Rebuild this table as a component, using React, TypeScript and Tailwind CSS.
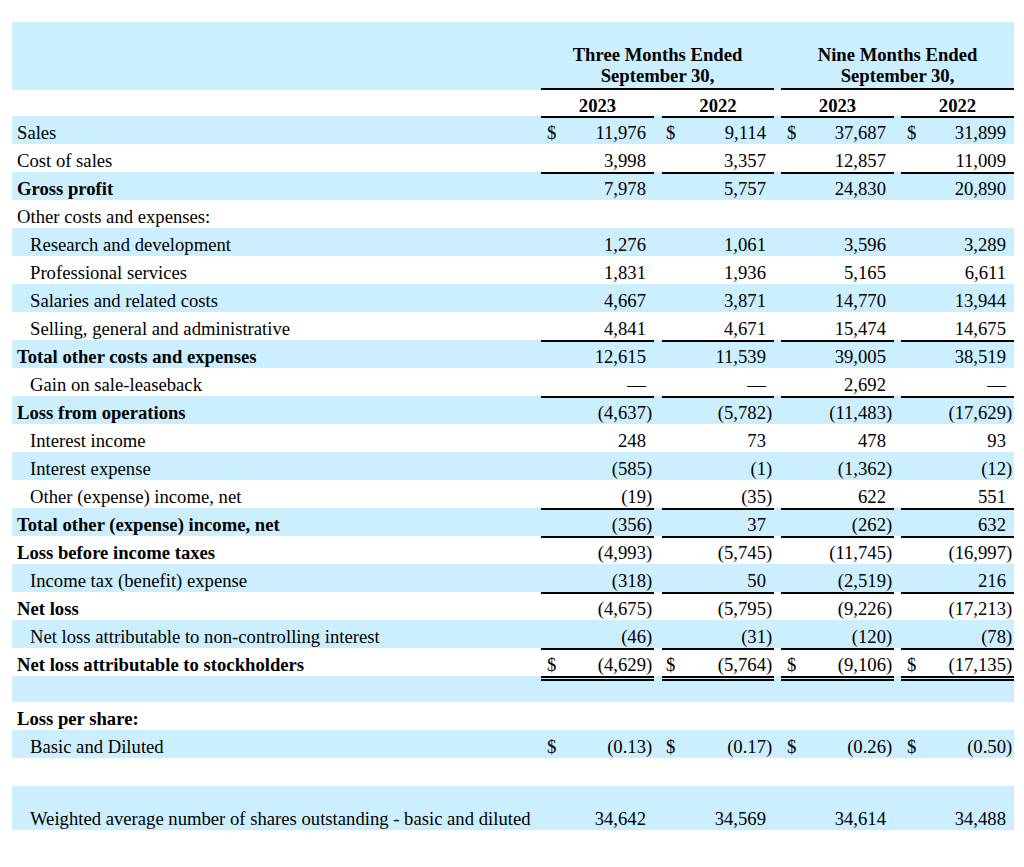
import React from 'react'

type Row = {
  label?: string
  vals?: string[]
  blue?: boolean
  bold?: boolean
  indent?: boolean
  dollar?: boolean
  rule?: 'single' | 'double'
  tall?: boolean
  short?: boolean
}

const rows: Row[] = [
  { label: 'Sales', blue: true, dollar: true, rule: 'single', vals: ['11,976', '9,114', '37,687', '31,899'] },
  { label: 'Cost of sales', vals: ['3,998', '3,357', '12,857', '11,009'] },
  { label: 'Gross profit', blue: true, bold: true, rule: 'single', vals: ['7,978', '5,757', '24,830', '20,890'] },
  { label: 'Other costs and expenses:' },
  { label: 'Research and development', blue: true, indent: true, vals: ['1,276', '1,061', '3,596', '3,289'] },
  { label: 'Professional services', indent: true, vals: ['1,831', '1,936', '5,165', '6,611'] },
  { label: 'Salaries and related costs', blue: true, indent: true, vals: ['4,667', '3,871', '14,770', '13,944'] },
  { label: 'Selling, general and administrative', indent: true, vals: ['4,841', '4,671', '15,474', '14,675'] },
  { label: 'Total other costs and expenses', blue: true, bold: true, rule: 'single', vals: ['12,615', '11,539', '39,005', '38,519'] },
  { label: 'Gain on sale-leaseback', indent: true, vals: ['—', '—', '2,692', '—'] },
  { label: 'Loss from operations', blue: true, bold: true, rule: 'single', vals: ['(4,637)', '(5,782)', '(11,483)', '(17,629)'] },
  { label: 'Interest income', indent: true, vals: ['248', '73', '478', '93'] },
  { label: 'Interest expense', blue: true, indent: true, vals: ['(585)', '(1)', '(1,362)', '(12)'] },
  { label: 'Other (expense) income, net', indent: true, vals: ['(19)', '(35)', '622', '551'] },
  { label: 'Total other (expense) income, net', blue: true, bold: true, rule: 'single', vals: ['(356)', '37', '(262)', '632'] },
  { label: 'Loss before income taxes', bold: true, rule: 'single', vals: ['(4,993)', '(5,745)', '(11,745)', '(16,997)'] },
  { label: 'Income tax (benefit) expense', blue: true, indent: true, vals: ['(318)', '50', '(2,519)', '216'] },
  { label: 'Net loss', bold: true, rule: 'single', vals: ['(4,675)', '(5,795)', '(9,226)', '(17,213)'] },
  { label: 'Net loss attributable to non-controlling interest', blue: true, indent: true, vals: ['(46)', '(31)', '(120)', '(78)'] },
  { label: 'Net loss attributable to stockholders', bold: true, dollar: true, rule: 'single', vals: ['(4,629)', '(5,764)', '(9,106)', '(17,135)'] },
  { blue: true, rule: 'double', short: true, vals: ['', '', '', ''] },
  { label: 'Loss per share:', bold: true },
  { label: 'Basic and Diluted', blue: true, indent: true, dollar: true, vals: ['(0.13)', '(0.17)', '(0.26)', '(0.50)'] },
  {},
  { label: 'Weighted average number of shares outstanding - basic and diluted', blue: true, indent: true, tall: true, vals: ['34,642', '34,569', '34,614', '34,488'] },
]

const grid = 'grid grid-cols-[529px_113px_8px_112px_7px_113px_7px_113px]'

function Amount({ v, dollar, col, rule, tall }: { v: string; dollar?: boolean; col: number; rule?: Row['rule']; tall?: boolean }) {
  const paren = v.endsWith(')')
  const num = paren ? v.slice(0, -1) : v
  const line =
    rule === 'single'
      ? 'border-t-2 border-black pt-[2px]'
      : rule === 'double'
        ? 'border-t-[5px] border-double border-black'
        : tall
          ? 'pt-[20px]'
          : 'pt-[4px]'
  return (
    <div className={`flex ${line} ${col === 1 ? 'pl-[4px]' : 'pl-[6px]'}`}>
      <span className="w-[12px]">{dollar ? '$' : ''}</span>
      <span className="flex-1 text-right whitespace-nowrap">{num}</span>
      <span className="w-[8px]">{paren ? ')' : ''}</span>
    </div>
  )
}

function StatementRow({ row }: { row: Row }) {
  const height = row.tall ? 'h-[44px]' : row.short ? 'h-[26px]' : 'h-[28px]'
  const vals = row.vals ?? ['', '', '', '']
  return (
    <div className={`${grid} ${height} ${row.blue ? 'bg-[#ccefff]' : ''}`}>
      <div
        className={`whitespace-nowrap ${row.indent ? 'pl-[18px]' : 'pl-[5px]'} ${row.bold ? 'font-bold' : ''} ${row.tall ? 'pt-[20px]' : 'pt-[4px]'}`}
      >
        {row.label}
      </div>
      {vals.map((v, i) => (
        <React.Fragment key={i}>
          {row.vals ? (
            <Amount v={v} dollar={row.dollar} col={i} rule={row.rule} tall={row.tall} />
          ) : (
            <div />
          )}
          {i < 3 && <div />}
        </React.Fragment>
      ))}
    </div>
  )
}

export default function App() {
  return (
    <div className="min-h-[867px] w-[1024px] bg-white pt-[22px] pl-[12px] font-['Liberation_Serif','Times_New_Roman',serif] text-[18.67px] leading-[25px] text-black">
      <div className="w-[1002px]">
        {/* period headings */}
        <div className={`${grid} h-[68px] bg-[#ccefff] font-bold leading-[21px]`}>
          <div />
          <div className="col-span-3 flex flex-col items-center justify-end border-b-2 border-black pb-[2px]">
            <span>Three Months Ended</span>
            <span>September 30,</span>
          </div>
          <div />
          <div className="col-span-3 flex flex-col items-center justify-end border-b-2 border-black pb-[2px]">
            <span>Nine Months Ended</span>
            <span>September 30,</span>
          </div>
        </div>
        <div className={`${grid} h-[26px] font-bold`}>
          <div />
          <div className="pt-[3px] text-center">2023</div>
          <div />
          <div className="pt-[3px] text-center">2022</div>
          <div />
          <div className="pt-[3px] text-center">2023</div>
          <div />
          <div className="pt-[3px] text-center">2022</div>
        </div>
        {rows.map((row, i) => (
          <StatementRow key={i} row={row} />
        ))}
      </div>
    </div>
  )
}
